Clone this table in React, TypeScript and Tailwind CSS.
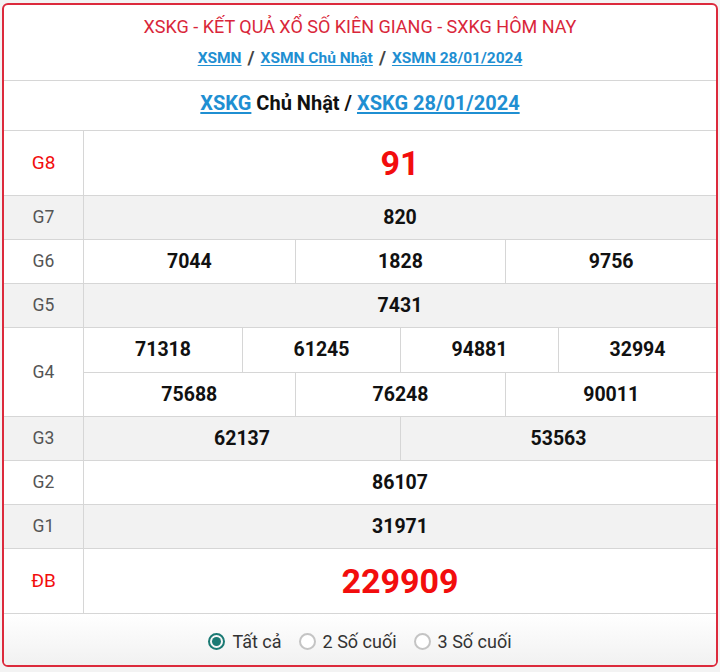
const NUMBERS: { label: string; rows: string[][]; tall?: boolean; red?: boolean; shade?: boolean }[] = [
  { label: "G8", rows: [["91"]], tall: true, red: true },
  { label: "G7", rows: [["820"]], shade: true },
  { label: "G6", rows: [["7044", "1828", "9756"]] },
  { label: "G5", rows: [["7431"]], shade: true },
  { label: "G4", rows: [["71318", "61245", "94881", "32994"], ["75688", "76248", "90011"]] },
  { label: "G3", rows: [["62137", "53563"]], shade: true },
  { label: "G2", rows: [["86107"]] },
  { label: "G1", rows: [["31971"]], shade: true },
  { label: "ĐB", rows: [["229909"]], tall: true, red: true },
]

const COLS: Record<number, string> = {
  1: "grid-cols-1",
  2: "grid-cols-2",
  3: "grid-cols-3",
  4: "grid-cols-4",
}

function Radio({ checked, label }: { checked?: boolean; label: string }) {
  return (
    <label className="flex items-center gap-[7px] cursor-pointer">
      <span
        className={`w-[17px] h-[17px] rounded-full border-2 flex items-center justify-center ${
          checked ? "border-[#1b7a74]" : "border-[#c4c4c4] bg-white"
        }`}
      >
        {checked && <span className="w-[9px] h-[9px] rounded-full bg-[#1b7a74]"></span>}
      </span>
      <span className="text-[18px] text-[#333]">{label}</span>
    </label>
  )
}

export default function App() {
  return (
    <div className="w-[720px] h-[672px] bg-[#f3f3f3] pt-[3px] px-[2px]" style={{ fontFamily: "Roboto, 'Liberation Sans', sans-serif" }}>
      <div className="h-[664px] bg-white border-2 border-[#dc2a3c] rounded-[6px] overflow-hidden flex flex-col">
        {/* header */}
        <div className="h-[76px] border-b border-[#d6d6d6] flex flex-col items-center shrink-0">
          <h1 className="mt-[11px] text-[18px] leading-[22px] text-[#d9263a]">
            XSKG - KẾT QUẢ XỔ SỐ KIÊN GIANG - SXKG HÔM NAY
          </h1>
          <div className="mt-[10px] flex items-center gap-[6px] text-[15.5px] font-bold leading-[20px]">
            <a className="text-[#1f8fd2] underline underline-offset-2">XSMN</a>
            <span className="text-[#444] text-[19px] font-bold">/</span>
            <a className="text-[#1f8fd2] underline underline-offset-2">XSMN Chủ Nhật</a>
            <span className="text-[#444] text-[19px] font-bold">/</span>
            <a className="text-[#1f8fd2] underline underline-offset-2">XSMN 28/01/2024</a>
          </div>
        </div>

        <div className="h-[50px] border-b border-[#d6d6d6] flex items-center justify-center shrink-0">
          <h2 className="text-[20px] font-bold text-[#111] -mt-[6px]">
            <a className="text-[#1f8fd2] underline underline-offset-2">XSKG</a> Chủ Nhật /{" "}
            <a className="text-[#1f8fd2] underline underline-offset-2">XSKG 28/01/2024</a>
          </h2>
        </div>

        {/* results table */}
        <div className="flex flex-col shrink-0">
          {NUMBERS.map((prize) => (
            <div
              key={prize.label}
              className={`flex border-b border-[#d6d6d6] ${prize.shade ? "bg-[#f2f2f2]" : "bg-white"} ${
                prize.tall ? "h-[65px]" : prize.rows.length > 1 ? "h-[89px]" : "h-[44px]"
              }`}
            >
              <div
                className={`w-[80px] shrink-0 border-r border-[#d6d6d6] flex items-center justify-center ${
                  prize.red ? "text-[19px] text-[#f20d0d]" : "text-[17.5px] text-[#555]"
                }`}
              >
                {prize.label}
              </div>
              <div className="flex-1 flex flex-col">
                {prize.rows.map((row, i) => (
                  <div
                    key={i}
                    className={`flex-1 grid ${COLS[row.length]} ${i < prize.rows.length - 1 ? "border-b border-[#d6d6d6]" : ""}`}
                  >
                    {row.map((n, j) => (
                      <div
                        key={n}
                        className={`flex items-center justify-center font-bold ${
                          j > 0 ? "border-l border-[#d6d6d6]" : ""
                        } ${prize.red ? "text-[34px] text-[#f20d0d]" : "text-[19.5px] text-[#111]"}`}
                      >
                        {n}
                      </div>
                    ))}
                  </div>
                ))}
              </div>
            </div>
          ))}
        </div>

        {/* footer filter */}
        <div className="flex-1 bg-gradient-to-b from-white to-[#f1f1f1] flex items-center justify-center gap-[17px] pt-[3px]">
          <Radio checked label="Tất cả" />
          <Radio label="2 Số cuối" />
          <Radio label="3 Số cuối" />
        </div>
      </div>
    </div>
  )
}
